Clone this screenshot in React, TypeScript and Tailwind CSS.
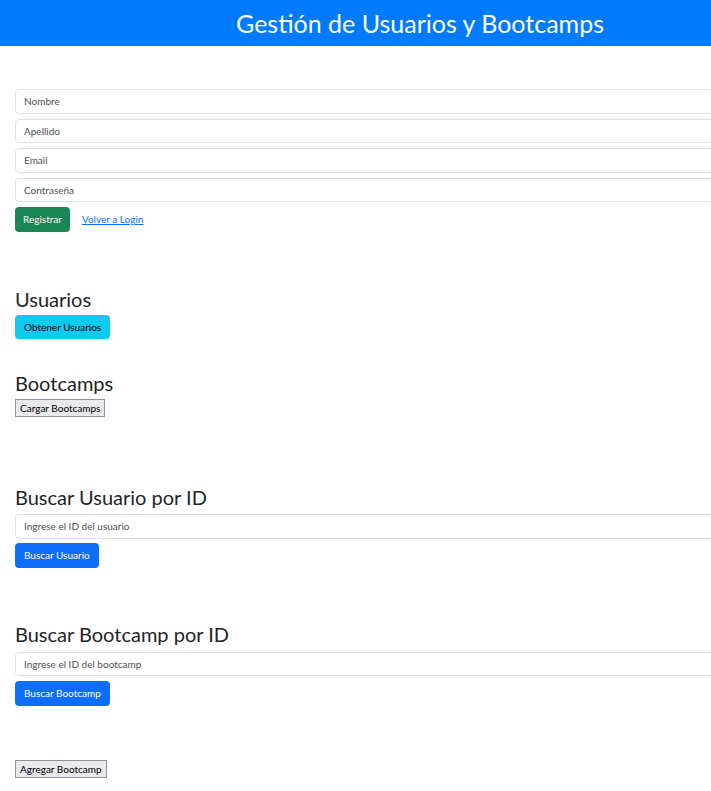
import React from "react";

const font = { fontFamily: 'Lato, "Noto Sans", sans-serif' };

function Input({ placeholder }: { placeholder: string }) {
  return (
    <input
      placeholder={placeholder}
      className="block w-full h-[24.5px] border border-[#dee2e6] rounded-[4px] px-[8px] text-[10px] text-[#212529] placeholder:text-[#495057] bg-white outline-none"
    />
  );
}

export default function App() {
  return (
    <div className="w-[840px] bg-white text-[#212529]" style={font}>
      <header className="h-[46px] bg-[#007bff] flex items-center justify-center">
        <h1 className="text-white text-[25px] leading-none">Gestión de Usuarios y Bootcamps</h1>
      </header>
      <div className="pl-[15px] pr-[15px]">
        <div className="mt-[43px] flex flex-col gap-[5px]">
          <Input placeholder="Nombre" />
          <Input placeholder="Apellido" />
          <Input placeholder="Email" />
          <Input placeholder="Contraseña" />
        </div>
        <div className="mt-[5px] flex items-center">
          <button className="h-[25px] px-[8px] rounded-[4px] bg-[#198754] text-white text-[10px]">Registrar</button>
          <a href="#" className="ml-[12px] text-[10px] text-[#0d6efd] underline">Volver a Login</a>
        </div>

        <h3 className="mt-[55px] text-[20px] leading-[24px]">Usuarios</h3>
        <button className="mt-[4px] h-[24px] px-[9px] rounded-[4px] bg-[#0dcaf0] text-black text-[10px]">Obtener Usuarios</button>

        <h3 className="mt-[32px] text-[20px] leading-[24px]">Bootcamps</h3>
        <button className="mt-[4px] block h-[18px] px-[4px] bg-[#e9e9ed] border border-[#8f8f9d] text-black text-[10px] leading-none">Cargar Bootcamps</button>

        <h3 className="mt-[68px] text-[20px] leading-[24px]">Buscar Usuario por ID</h3>
        <div className="mt-[5px]"><Input placeholder="Ingrese el ID del usuario" /></div>
        <button className="mt-[4px] h-[25px] px-[9px] rounded-[4px] bg-[#0d6efd] text-white text-[10px]">Buscar Usuario</button>

        <h3 className="mt-[54px] text-[20px] leading-[24px]">Buscar Bootcamp por ID</h3>
        <div className="mt-[6px]"><Input placeholder="Ingrese el ID del bootcamp" /></div>
        <button className="mt-[5px] h-[25px] px-[9px] rounded-[4px] bg-[#0d6efd] text-white text-[10px]">Buscar Bootcamp</button>

        <div className="mt-[54px] pb-[10px]">
          <button className="block h-[18px] px-[4px] bg-[#e9e9ed] border border-[#8f8f9d] text-black text-[10px] leading-none">Agregar Bootcamp</button>
        </div>
      </div>
    </div>
  );
}
